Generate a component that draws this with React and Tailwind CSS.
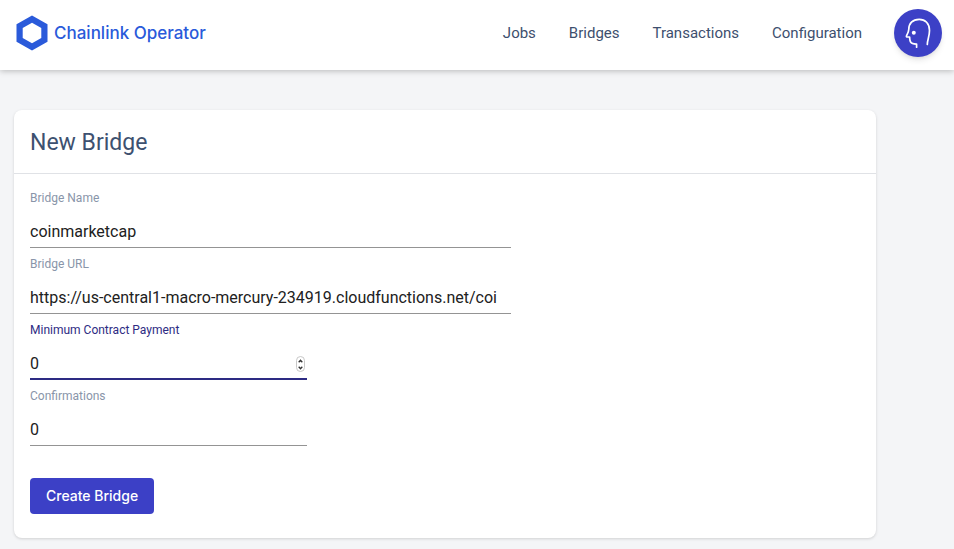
import { useState } from 'react'

const links = ['Jobs', 'Bridges', 'Transactions', 'Configuration']

function Logo() {
  return (
    <a href="#" className="flex items-center gap-[6px] text-[#2a5ada]">
      <svg className="h-[36px] w-[32px]" viewBox="0 0 32 36" aria-hidden="true">
        <path
          fill="currentColor"
          fillRule="evenodd"
          d="M16 0.5 31.5 9.2v17.6L16 35.5 0.5 26.8V9.2L16 0.5ZM16 7.8 6.7 13v10L16 28.2 25.3 23V13L16 7.8Z"
        />
      </svg>
      <span className="font-[Inter,sans-serif] text-[17px] leading-6 font-medium">Chainlink Operator</span>
    </a>
  )
}

function Avatar() {
  return (
    <button
      type="button"
      aria-label="Account"
      className="h-12 w-12 shrink-0 rounded-full bg-[#3c40c6] text-white shadow-md"
    >
      <svg
        className="h-12 w-12"
        viewBox="0 0 48 48"
        fill="none"
        stroke="currentColor"
        strokeWidth="1.7"
        strokeLinecap="round"
        strokeLinejoin="round"
        aria-hidden="true"
      >
        <path d="M33.300 35.500C33.100 31.500 35.500 28 35.500 21.500 35.500 14.500 31.200 10.300 25.200 10.300 18.500 10.300 14.800 14.500 14.800 20.200 14.800 22.600 13.600 24.800 12.500 26.800 12.200 27.500 12.600 28 13.300 28H15.600C15.800 30.200 15.700 31.600 16.600 33 17.800 34.900 20 35 22.600 35.200V38.200" />
        <circle cx="19.800" cy="23.700" r="2" fill="currentColor" stroke="none" />
      </svg>
    </button>
  )
}

function Stepper({ onStep }) {
  return (
    <span className="absolute right-[2px] bottom-[8px] flex h-[16px] w-[9px] flex-col overflow-hidden rounded-full border border-[#c8c8c8] bg-white text-[#333333]">
      <button type="button" aria-label="Increase" onClick={() => onStep(1)} className="flex flex-1 items-center justify-center">
        <svg className="h-[4px] w-[5px]" viewBox="0 0 5 4" fill="none" stroke="currentColor" strokeWidth="1.3">
          <path d="M.7 3.200 2.500 1.200l1.800 2" />
        </svg>
      </button>
      <button type="button" aria-label="Decrease" onClick={() => onStep(-1)} className="flex flex-1 items-center justify-center">
        <svg className="h-[4px] w-[5px]" viewBox="0 0 5 4" fill="none" stroke="currentColor" strokeWidth="1.3">
          <path d="M.7.8l1.800 2 1.800-2" />
        </svg>
      </button>
    </span>
  )
}

function Field({ id, label, initial, type = 'text', narrow, active }) {
  const [value, setValue] = useState(initial)
  return (
    <div className={`relative flex h-[66px] flex-col justify-between pt-2 ${narrow ? 'w-1/3' : 'w-[58%]'}`}>
      <label htmlFor={id} className={`text-xs leading-4 ${active ? 'text-[#2d2b83]' : 'text-[#8995a9]'}`}>
        {label}
      </label>
      <input
        id={id}
        type={type}
        value={value}
        onChange={(e) => setValue(e.target.value)}
        className={`h-8 w-full appearance-none rounded-none bg-transparent text-base text-[#212121] outline-none [-moz-appearance:textfield] [&::-webkit-inner-spin-button]:appearance-none ${
          active ? 'border-b-2 border-[#2d2b83]' : 'border-b border-[#949494]'
        }`}
      />
      {active && <Stepper onStep={(n) => setValue(String(Number(value) + n))} />}
    </div>
  )
}

export default function App() {
  return (
    <div className="min-h-screen bg-[#f4f5f7] pb-[11px] font-[Roboto,sans-serif]">
      <header className="flex items-center justify-between bg-white pt-[9px] pr-3 pb-[13px] pl-4 shadow-[0_1px_6px_rgba(0,0,0,0.25)]">
        <Logo />
        <div className="flex items-center gap-8">
          <nav className="flex gap-[33px] text-[15px] text-[#3d4f6e]">
            {links.map((link) => (
              <a key={link} href="#">
                {link}
              </a>
            ))}
          </nav>
          <Avatar />
        </div>
      </header>

      <main className="pt-10 pr-[78px] pl-[14px]">
        <section className="rounded-lg bg-white shadow-[0_1px_3px_rgba(0,0,0,0.15)]">
          <h1 className="border-b border-[#e0e2e6] px-4 pt-[17px] pb-[15px] text-[23px] leading-[31px] text-[#3d5170]">
            New Bridge
          </h1>
          <form className="px-4 pt-2 pb-6" onSubmit={(e) => e.preventDefault()}>
            <Field id="name" label="Bridge Name" initial="coinmarketcap" />
            <Field
              id="url"
              label="Bridge URL"
              initial="https://us-central1-macro-mercury-234919.cloudfunctions.net/coi"
            />
            <Field id="payment" label="Minimum Contract Payment" initial="0" type="number" narrow active />
            <Field id="confirmations" label="Confirmations" initial="0" type="number" narrow />
            <button
              type="submit"
              className="mt-8 block h-9 rounded bg-[#3c40c6] px-4 font-[Inter,sans-serif] text-sm font-medium text-white"
            >
              Create Bridge
            </button>
          </form>
        </section>
      </main>
    </div>
  )
}
